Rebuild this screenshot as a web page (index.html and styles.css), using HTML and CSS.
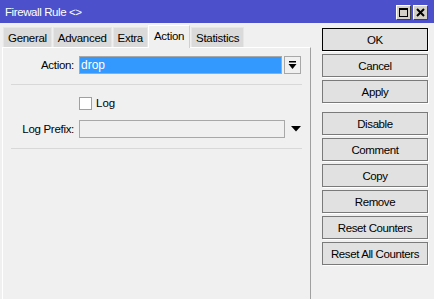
FILE: index.html
```html
<!DOCTYPE html>
<html lang="en">
<head>
    <meta charset="UTF-8">
    <title>Firewall Rule &lt;&gt;</title>
    <link rel="stylesheet" href="styles.css">
</head>
<body>

    <div class="window">
        <!-- Barra de titulo -->
        <div class="titlebar">
            <span class="title">Firewall Rule &lt;&gt;</span>
            <div class="win-buttons">
                <span class="win-btn">
                    <svg width="13" height="13" viewBox="0 0 13 13"><rect x="2.5" y="2.5" width="8" height="8" fill="none" stroke="#000" stroke-width="1"/><line x1="2" y1="3.5" x2="11" y2="3.5" stroke="#000" stroke-width="1"/></svg>
                </span>
                <span class="win-btn">
                    <svg width="13" height="13" viewBox="0 0 13 13"><path d="M3 3 L10 10 M10 3 L3 10" stroke="#000" stroke-width="2"/></svg>
                </span>
            </div>
        </div>

        <div class="content">
            <div class="main">
                <div class="tabs">
                    <span class="tab">General</span>
                    <span class="tab">Advanced</span>
                    <span class="tab">Extra</span>
                    <span class="tab active">Action</span>
                    <span class="tab">Statistics</span>
                </div>

                <div class="panel">
                    <div class="row">
                        <label class="label">Action:</label>
                        <div class="input selected">drop</div>
                        <span class="combo-btn">
                            <svg width="9" height="9" viewBox="0 0 9 9"><rect x="1" y="0" width="7" height="1.5" fill="#000"/><path d="M0.5 3 L8.5 3 L4.5 8 Z" fill="#000"/></svg>
                        </span>
                    </div>
                    <div class="separator"></div>

                    <div class="row check-row">
                        <span class="checkbox"></span>
                        <span>Log</span>
                    </div>

                    <div class="row">
                        <label class="label">Log Prefix:</label>
                        <div class="input empty"></div>
                        <span class="arrow">
                            <svg width="10" height="6" viewBox="0 0 10 6"><path d="M0 0 L10 0 L5 5.5 Z" fill="#000"/></svg>
                        </span>
                    </div>
                    <div class="separator"></div>
                </div>
            </div>

            <div class="side">
                <button class="btn default">OK</button>
                <button class="btn">Cancel</button>
                <button class="btn">Apply</button>
                <button class="btn spaced">Disable</button>
                <button class="btn">Comment</button>
                <button class="btn">Copy</button>
                <button class="btn">Remove</button>
                <button class="btn">Reset Counters</button>
                <button class="btn">Reset All Counters</button>
            </div>
        </div>
    </div>

</body>
</html>
```

FILE: styles.css
```css
body {
    margin: 0;
    font-family: "Liberation Sans", Arial, sans-serif;
    font-size: 11px;
    color: #000;
    background-color: #f0f0f0;
}

.window {
    width: 434px;
    height: 299px;
    overflow: hidden;
    background-color: #f0f0f0;
}

.titlebar {
    height: 23px;
    background-color: #4d50cb;
    display: flex;
    align-items: center;
    justify-content: space-between;
    padding: 0 6px 0 5px;
    box-sizing: border-box;
}

.title {
    color: #fff;
    font-size: 11.5px;
    letter-spacing: -0.4px;
    padding-top: 1px;
}

.win-buttons {
    display: flex;
    gap: 2px;
    padding-top: 2px;
}

.win-btn {
    width: 13px;
    height: 13px;
    background-color: #d4d0c8;
    border: 1px solid #404040;
    border-top-color: #fff;
    border-left-color: #fff;
    display: flex;
}

.content {
    display: flex;
    height: 276px;
}

.main {
    width: 309px;
    padding-left: 2px;
    display: flex;
    flex-direction: column;
}

.tabs {
    display: flex;
    align-items: flex-end;
    height: 24px;
    padding-left: 1px;
}

.tab {
    height: 19px;
    line-height: 20px;
    padding: 0 4px;
    margin-right: 1px;
    background-color: #dadada;
    border: 1px solid #e6e6e6;
    border-bottom: none;
    font-size: 11.5px;
    letter-spacing: -0.3px;
}

.tab.active {
    height: 22px;
    line-height: 20px;
    background-color: #f0f0f0;
    border-color: #fff;
    border-right-color: #d0d0d0;
    padding: 0 5px;
    margin-left: -1px;
    margin-bottom: -1px;
    position: relative;
}

.panel {
    flex: 1;
    border-top: 1px solid #fff;
    border-left: 1px solid #fff;
    border-right: 1px solid #a0a0a0;
    padding: 8px 8px 0 8px;
}

.row {
    display: flex;
    align-items: center;
    height: 18px;
}

.label {
    width: 63px;
    text-align: right;
    margin-right: 5px;
    font-size: 11.5px;
    letter-spacing: -0.3px;
}

.input {
    width: 200px;
    height: 16px;
    border: 1px solid #a8a8a8;
    line-height: 16px;
    padding-left: 1px;
    font-size: 12px;
}

.input.selected {
    background-color: #3399ff;
    color: #fff;
}

.input.empty {
    width: 203px;
    background-color: #f0f0f0;
}

.combo-btn {
    width: 15px;
    height: 16px;
    margin-left: 2px;
    border: 1px solid #a8a8a8;
    display: flex;
    align-items: center;
    justify-content: center;
}

.arrow {
    margin-left: 6px;
    display: flex;
}

.separator {
    height: 1px;
    background-color: #d8d8d8;
    margin: 10px 0 9px 0;
}

.check-row {
    padding-left: 68px;
    font-size: 11.5px;
    margin-bottom: 8px;
}

.checkbox {
    width: 11px;
    height: 11px;
    background-color: #fff;
    border: 1px solid #a0a0a0;
    margin-right: 4px;
}

.side {
    display: flex;
    flex-direction: column;
    gap: 3px;
    padding: 5px 0 0 11px;
}

.btn {
    width: 106px;
    height: 23px;
    background-color: #e1e1e1;
    border: 1px solid #7a7a7a;
    box-shadow: 1px 1px 0 #fff;
    font-family: "Liberation Sans", Arial, sans-serif;
    font-size: 11.5px;
    letter-spacing: -0.4px;
    padding: 0;
    color: #000;
}

.btn.default {
    border-color: #000;
}

.btn.spaced {
    margin-top: 6px;
}
```
